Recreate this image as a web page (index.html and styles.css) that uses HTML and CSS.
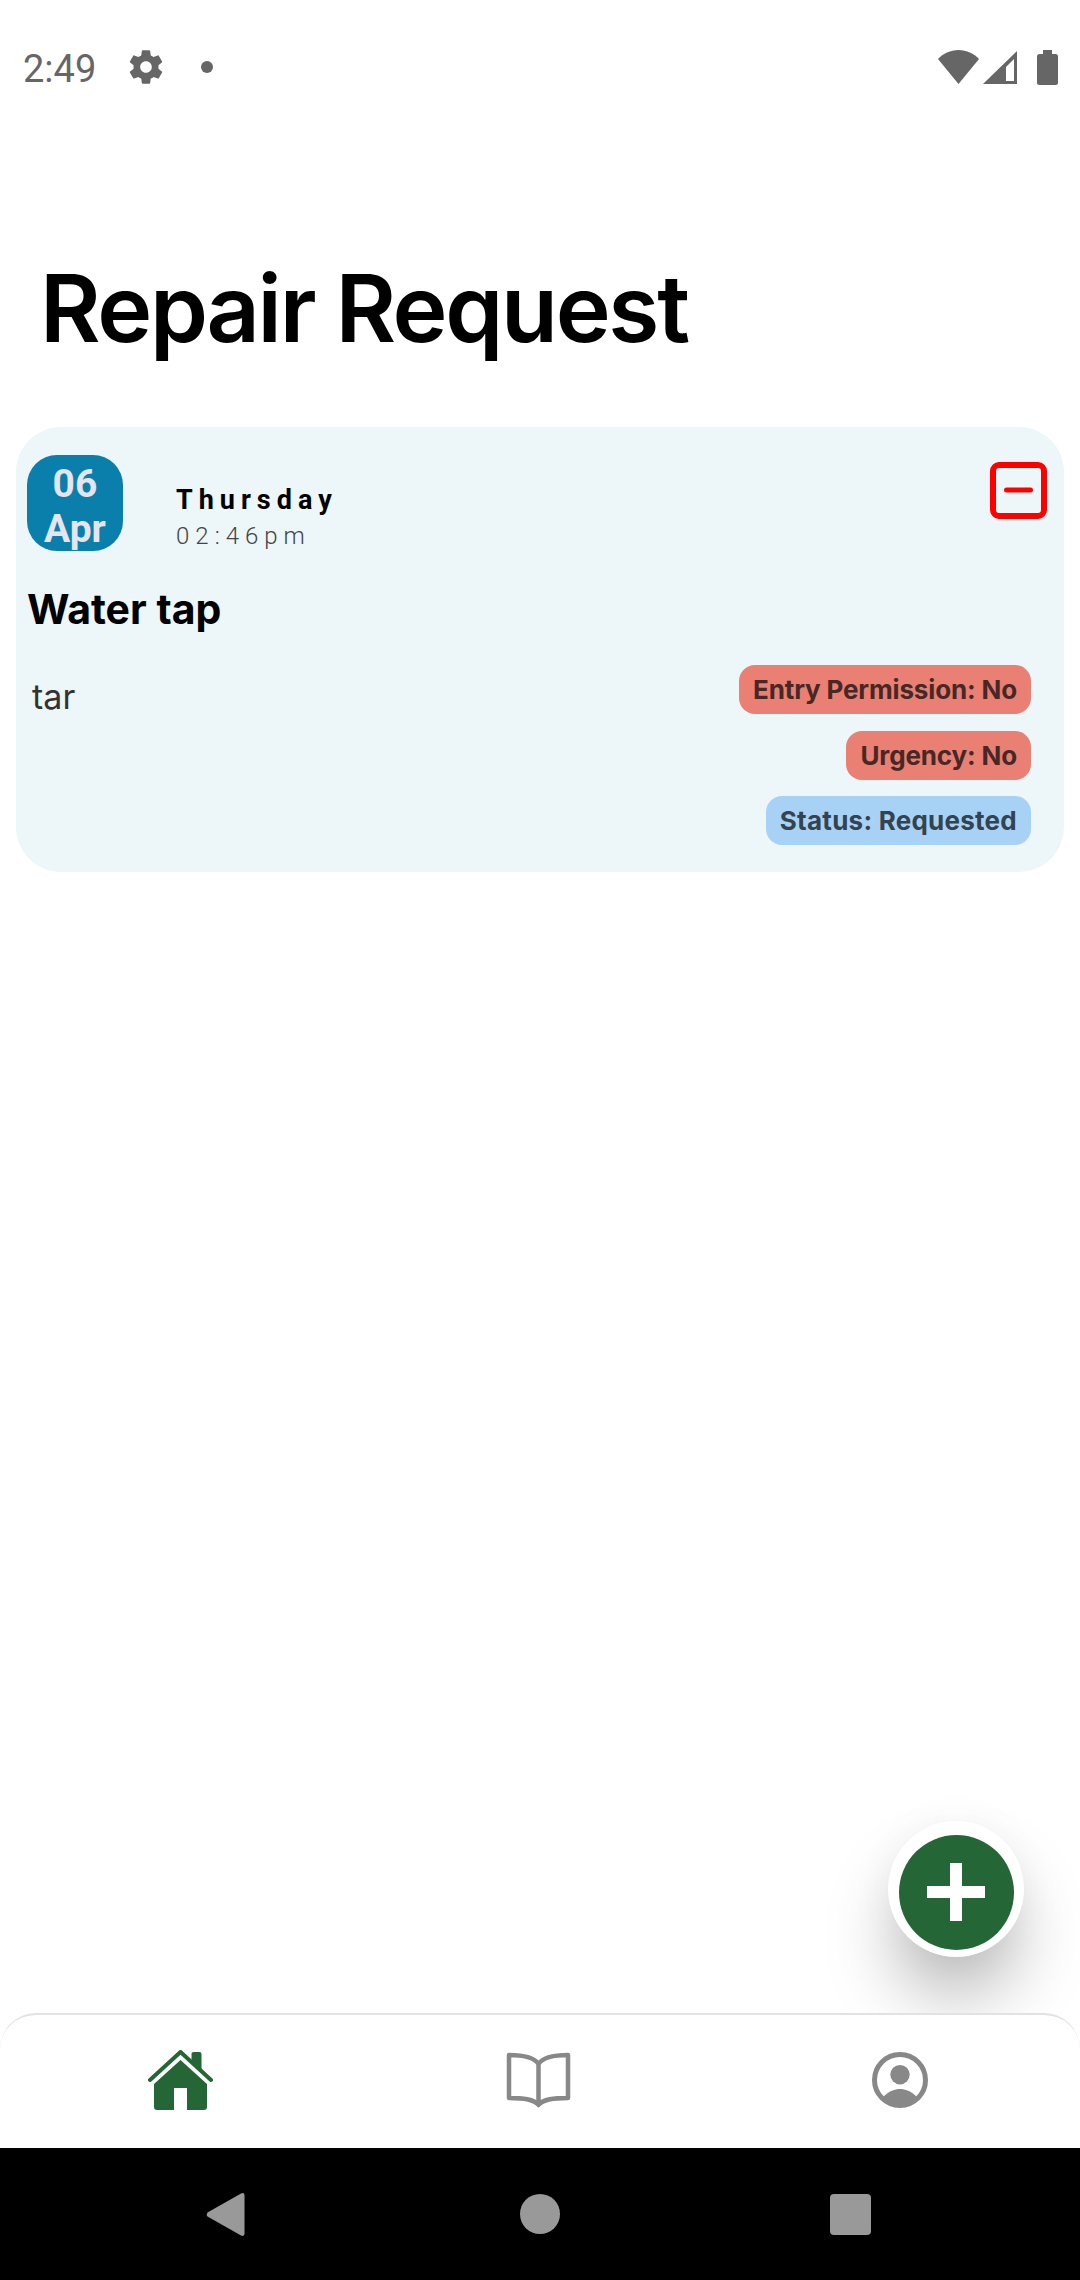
FILE: index.html
```html
<!DOCTYPE html>
<html lang="en">
<head>
    <meta charset="UTF-8">
    <meta name="viewport" content="width=device-width, initial-scale=1.0">
    <title>Repair Request</title>
    <link rel="stylesheet" href="styles.css">
</head>
<body>
    <div class="status-bar">
        <span class="clock">2:49</span>
        <svg class="gear" viewBox="0 0 24 24"><path d="M19.43 12.98c.04-.32.07-.64.07-.98s-.03-.66-.07-.98l2.11-1.65c.19-.15.24-.42.12-.64l-2-3.46c-.12-.22-.39-.3-.61-.22l-2.49 1c-.52-.4-1.08-.73-1.69-.98l-.38-2.65C14.46 2.18 14.25 2 14 2h-4c-.25 0-.46.18-.49.42l-.38 2.65c-.61.25-1.17.59-1.69.98l-2.49-1c-.23-.09-.49 0-.61.22l-2 3.46c-.13.22-.07.49.12.64l2.11 1.65c-.04.32-.07.65-.07.98s.03.66.07.98l-2.11 1.65c-.19.15-.24.42-.12.64l2 3.46c.12.22.39.3.61.22l2.49-1c.52.4 1.08.73 1.69.98l.38 2.65c.03.24.24.42.49.42h4c.25 0 .46-.18.49-.42l.38-2.65c.61-.25 1.17-.59 1.69-.98l2.49 1c.23.09.49 0 .61-.22l2-3.46c.12-.22.07-.49-.12-.64l-2.11-1.65zM12 15.5c-1.93 0-3.5-1.57-3.5-3.5s1.57-3.5 3.5-3.5 3.5 1.57 3.5 3.5-1.57 3.5-3.5 3.5z"/></svg>
        <span class="dot"></span>
        <svg class="wifi" viewBox="0 0 41 34"><path d="M0 9C5 3.500 12.500 0 20.500 0S36 3.500 41 9L20.500 34Z"/></svg>
        <svg class="signal" viewBox="0 0 34 33"><path fill-rule="evenodd" d="M34 0V33H0ZM31 8 23 16V30H31Z"/></svg>
        <svg class="battery" viewBox="0 0 21 35"><path d="M6 0H15V4H18.500Q21 4 21 6.500V32.500Q21 35 18.500 35H2.500Q0 35 0 32.500V6.500Q0 4 2.500 4H6Z"/></svg>
    </div>

    <header class="page-header">
        <h1>Repair Request</h1>
    </header>

    <main class="content">
        <section class="request-card">
            <div class="card-top">
                <div class="date-box">
                    <span>06</span>
                    <span>Apr</span>
                </div>
                <div class="when">
                    <div class="weekday">Thursday</div>
                    <div class="time">02:46pm</div>
                </div>
                <svg class="remove-icon" viewBox="0 0 57 57"><rect x="3" y="3" width="51" height="51" rx="6"/><path d="M16.500 28H40.500"/></svg>
            </div>
            <h2>Water tap</h2>
            <div class="card-body">
                <p>tar</p>
                <div class="chips">
                    <span class="chip chip-red">Entry Permission: No</span>
                    <span class="chip chip-red">Urgency: No</span>
                    <span class="chip chip-blue">Status: Requested</span>
                </div>
            </div>
        </section>

        <button class="fab">
            <svg viewBox="0 0 58 58"><path d="M23 0H35V23H58V35H35V58H23V35H0V23H23Z"/></svg>
        </button>
    </main>

    <nav class="tab-bar">
        <svg class="tab-home" viewBox="0 0 65 61">
            <path class="roof" d="M2 30 32.500 2 63 30"/>
            <path d="M43.500 14V4Q43.500 2 45.500 2H51.500Q53.500 2 53.500 4V23Z"/>
            <path d="M32.500 10 6 34V57Q6 60 9 60H26V38H39V60H56Q59 60 59 57V34Z"/>
        </svg>
        <svg class="tab-book" viewBox="0 0 65 57">
            <path d="M32.500 12C28 5 17 3 3 3V46C17 46 28 47 32.500 53 37 47 48 46 62 46V3C48 3 37 5 32.500 12ZM32.500 12V53"/>
        </svg>
        <svg class="tab-profile" viewBox="0 0 56 56">
            <circle class="ring" cx="28" cy="28" r="25.500"/>
            <circle cx="28" cy="22.700" r="9.700"/>
            <path d="M11 45C17 39 23 37 28 37S39 39 45 45A24 24 0 0 1 11 45Z"/>
        </svg>
    </nav>

    <div class="system-nav">
        <svg class="sys-back" viewBox="0 0 39 45"><path d="M35 1.500Q38.500 0 38.500 3.500V41.500Q38.500 45 35 43.500L1.500 24.500Q0 22.500 1.500 20.500Z"/></svg>
        <span class="sys-home"></span>
        <span class="sys-recent"></span>
    </div>
</body>
</html>
```

FILE: styles.css
```css
* {
    box-sizing: border-box;
}
body {
    margin: 0;
    width: 1080px;
    height: 2280px;
    display: flex;
    flex-direction: column;
    overflow: hidden;
    font-family: Inter, sans-serif;
    background-color: #fff;
    color: #000;
}

/* status bar */
.status-bar {
    height: 88px;
    flex: none;
    padding: 46px 22px 0 23px;
    display: flex;
    align-items: center;
}
.status-bar svg {
    fill: #666;
    display: block;
}
.clock {
    font-family: Roboto, sans-serif;
    font-size: 38px;
    color: #666;
    padding-top: 3px;
}
.gear {
    width: 40px;
    height: 40px;
    margin-left: 30px;
}
.dot {
    width: 12px;
    height: 12px;
    margin-left: 35px;
    border-radius: 50%;
    background-color: #666;
}
.wifi {
    width: 41px;
    height: 34px;
    margin-left: auto;
}
.signal {
    width: 34px;
    height: 33px;
    margin-left: 4px;
}
.battery {
    width: 21px;
    height: 35px;
    margin-left: 20px;
}

/* title */
.page-header {
    height: 339px;
    flex: none;
    padding: 165px 0 0 40px;
}
.page-header h1 {
    margin: 0;
    font-size: 93px;
    font-weight: 600;
    line-height: 110px;
    letter-spacing: -2.300px;
}

/* card */
.content {
    flex: 1;
    position: relative;
    padding: 0 16px;
}
.request-card {
    height: 445px;
    padding: 28px 17px 0 11px;
    background-color: #edf6f9;
    border-radius: 45px;
}
.card-top {
    display: flex;
    align-items: flex-start;
}
.date-box {
    width: 96px;
    height: 96px;
    flex: none;
    overflow: hidden;
    display: flex;
    flex-direction: column;
    align-items: center;
    padding-top: 7px;
    background-color: #0b7fab;
    border-radius: 30px;
    color: #e5e5f0;
    font-family: Roboto, sans-serif;
    font-size: 39px;
    font-weight: 700;
    line-height: 45px;
}
.when {
    margin: 28px 0 0 53px;
    font-family: Roboto, sans-serif;
}
.weekday {
    font-size: 27px;
    font-weight: 700;
    letter-spacing: 6px;
    line-height: 35px;
}
.time {
    font-size: 24px;
    font-weight: 300;
    letter-spacing: 6px;
    line-height: 36px;
    color: #444;
}
.remove-icon {
    width: 57px;
    height: 57px;
    margin: 7px 0 0 auto;
    fill: none;
    stroke: #f00;
    stroke-width: 6;
    stroke-linecap: round;
}
.remove-icon path {
    stroke-width: 5;
}
.request-card h2 {
    margin: 30px 0 0;
    font-size: 41px;
    font-weight: 700;
    line-height: 50px;
}
.card-body {
    display: flex;
    justify-content: space-between;
    align-items: flex-start;
    margin: 31px 16px 0 5px;
}
.card-body p {
    margin: 12px 0 0;
    font-size: 34px;
    line-height: 40px;
    color: #333;
}
.chips {
    display: flex;
    flex-direction: column;
    align-items: flex-end;
    gap: 16.500px;
}
.chip {
    height: 49px;
    padding: 1px 14px 0;
    border-radius: 16px;
    font-size: 26px;
    font-weight: 700;
    line-height: 48px;
    letter-spacing: -0.150px;
}
.chip-red {
    background-color: #ea7f74;
    color: #472824;
}
.chip-blue {
    background-color: #a8d2f5;
    color: #334350;
    letter-spacing: 0.250px;
}

/* add button */
.fab {
    position: absolute;
    right: 56px;
    bottom: 56px;
    width: 136px;
    height: 136px;
    padding: 0;
    border: 0;
    border-radius: 50%;
    background-color: #fff;
    box-shadow: 0 45px 70px -6px rgba(0, 0, 0, 0.28), 0 0 40px rgba(0, 0, 0, 0.04);
}
.fab::before {
    content: "";
    position: absolute;
    left: 11px;
    top: 14px;
    width: 115px;
    height: 115px;
    border-radius: 50%;
    background-color: #256637;
}
.fab svg {
    position: absolute;
    left: 39px;
    top: 42px;
    width: 58px;
    height: 58px;
    fill: #fff;
}

/* tabs */
.tab-bar {
    height: 135px;
    flex: none;
    z-index: 1;
    display: flex;
    align-items: flex-start;
    background-color: #fff;
    border-top: 2px solid #e2e2e2;
    border-radius: 36px 36px 0 0;
}
.tab-home {
    width: 65px;
    height: 61px;
    margin: 35px 0 0 148px;
    fill: #256637;
}
.tab-home .roof {
    fill: none;
    stroke: #256637;
    stroke-width: 4;
    stroke-linecap: round;
    stroke-linejoin: round;
}
.tab-book {
    width: 65px;
    height: 57px;
    margin: 37px 0 0 293px;
    fill: none;
    stroke: #888;
    stroke-width: 4.500;
    stroke-linejoin: round;
}
.tab-profile {
    width: 56px;
    height: 56px;
    margin: 37px 0 0 301px;
    fill: #888;
}
.tab-profile .ring {
    fill: none;
    stroke: #888;
    stroke-width: 5;
}

/* system navigation */
.system-nav {
    height: 132px;
    flex: none;
    display: flex;
    align-items: center;
    background-color: #000;
}
.sys-back {
    width: 39px;
    height: 45px;
    margin-left: 206px;
    fill: #999;
}
.sys-home {
    width: 40px;
    height: 40px;
    margin-left: 275px;
    border-radius: 50%;
    background-color: #999;
}
.sys-recent {
    width: 41px;
    height: 41px;
    margin-left: 270px;
    border-radius: 4px;
    background-color: #999;
}
```
